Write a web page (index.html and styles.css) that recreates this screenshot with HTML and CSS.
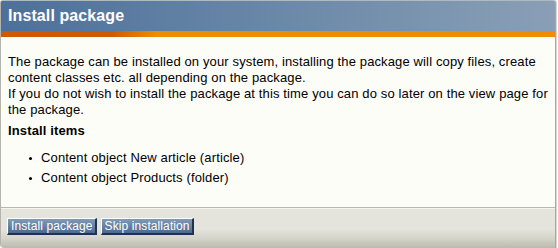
FILE: index.html
```html
<!DOCTYPE html>
<html>
<head>
<meta charset="utf-8">
<link rel="stylesheet" href="styles.css">
</head>
<body>
<div class="box">
  <div class="box-header">
    <h1 class="title">Install package</h1>
  </div>
  <div class="accent"></div>
  <div class="box-content">
    <p class="intro">The package can be installed on your system, installing the package will copy files, create content classes etc. all depending on the package.<br>If you do not wish to install the package at this time you can do so later on the view page for the package.</p>
    <h2 class="subtitle">Install items</h2>
    <ul class="items">
      <li>Content object New article (article)</li>
      <li>Content object Products (folder)</li>
    </ul>
  </div>
  <div class="box-footer">
    <button class="btn">Install package</button>
    <button class="btn">Skip installation</button>
  </div>
</div>
</body>
</html>
```
FILE: styles.css
```css
html, body {
  margin: 0;
  padding: 0;
  background: #ffffff;
}
body {
  font-family: "Liberation Sans", Arial, sans-serif;
  font-size: 13px;
  letter-spacing: 0.13px;
  color: #000;
}
.box {
  width: 554px;
  height: 248px;
  border-left: 1px solid #b4b4ac;
  border-right: 1px solid #a8a8a0;
  box-shadow: 1px 0 0 #d8d8d2;
  border-radius: 3px 3px 0 4px;
  overflow: hidden;
  display: flex;
  flex-direction: column;
  background: #fdfdf8;
}
.box-header {
  height: 31px;
  background: linear-gradient(to right, #4d709a 0%, #6a88a8 50%, #8a9fb6 100%);
  display: flex;
  align-items: center;
  padding-left: 7px;
  border-top: 1px solid #b0b8c0;
  box-sizing: border-box;
}
.title {
  margin: 0;
  font-size: 16px;
  font-weight: bold;
  letter-spacing: 0.1px;
  color: #ffffff;
  line-height: 20px;
}
.accent {
  height: 6px;
  background: linear-gradient(to right, #cf5800 0%, #d05a00 20%, #f08c00 28%, #f08c00 100%);
}
.box-content {
  flex: 1;
  padding: 17px 1px 0 7px;
  background: #fdfdf8;
  border-bottom: 1px solid #b8b8ae;
}
.intro {
  margin: 0;
  line-height: 16px;
}
.subtitle {
  margin: 5px 0 0 0;
  font-size: 13px;
  font-weight: bold;
  line-height: 16px;
}
.items {
  margin: 9px 0 0 0;
  padding-left: 33px;
  list-style: none;
}
.items li {
  line-height: 20px;
  position: relative;
}
.items li::before {
  content: "";
  position: absolute;
  left: -12px;
  top: 9px;
  width: 3px;
  height: 3px;
  border-radius: 50%;
  background: #000;
}
.box-footer {
  height: 40px;
  box-sizing: border-box;
  border-top: 1px solid #f4f4ee;
  background: linear-gradient(to bottom, #e4e4dc 0%, #e4e4dc 52%, #d4d4ca 75%, #babaae 100%);
  display: flex;
  align-items: flex-start;
  gap: 4px;
  padding: 9px 0 0 6px;
}
.btn {
  font-family: "Liberation Sans", Arial, sans-serif;
  font-size: 12px;
  letter-spacing: 0.1px;
  color: #ffffff;
  height: 17px;
  line-height: 14px;
  padding: 0 2px 0 3px;
  margin: 0;
  background: linear-gradient(to bottom, #8099b6 0%, #6a85a6 45%, #4b6a90 100%);
  border-style: solid;
  border-width: 1px 2px 2px 1px;
  border-color: #ffffff #1e3350 #1e3350 #ffffff;
  cursor: pointer;
}
```
